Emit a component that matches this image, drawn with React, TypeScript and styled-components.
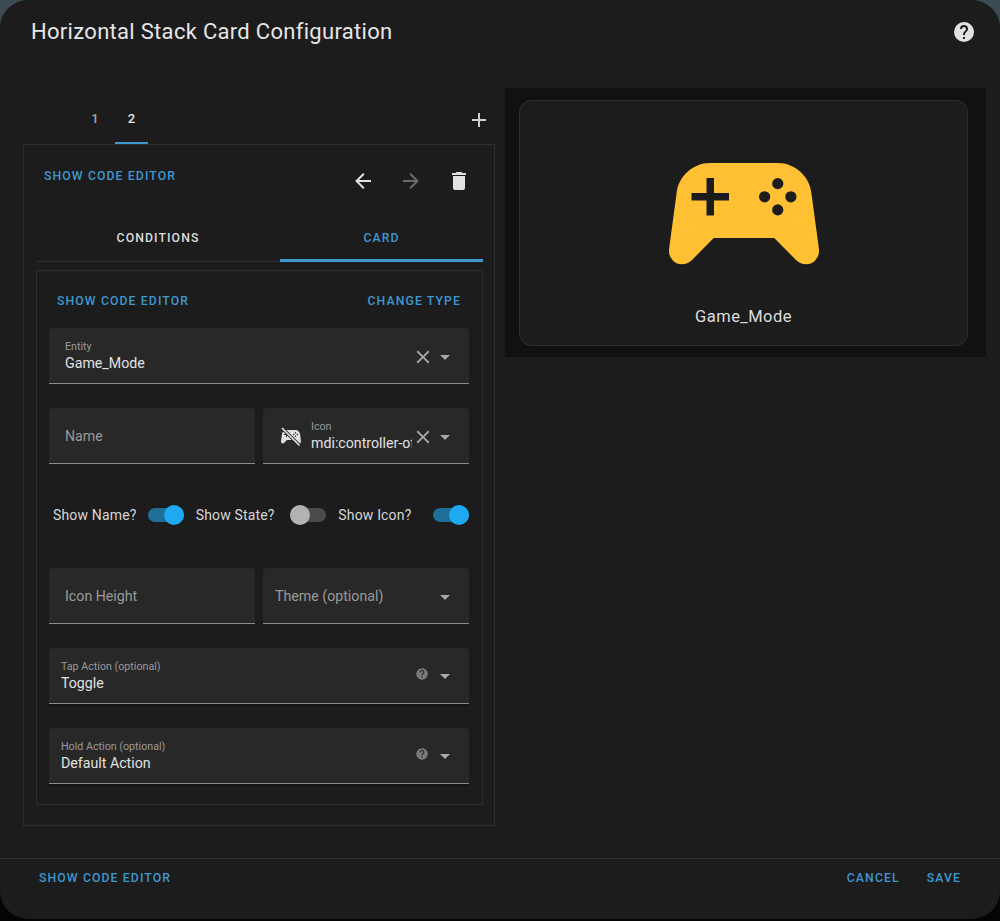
import React from "react";
import styled, { createGlobalStyle } from "styled-components";

const Global = createGlobalStyle`
  html, body { margin: 0; padding: 0; background: #050505; }
  #root { width: 1000px; height: 921px; overflow: hidden; }
  * { box-sizing: border-box; }
`;

const P = {
  controller:
    "M7.97,16L5,19C4.67,19.3 4.23,19.5 3.75,19.5A1.75,1.75 0 0,1 2,17.75V17.5L3,10.12C3.21,7.81 5.14,6 7.5,6H16.5C18.86,6 20.79,7.81 21,10.12L22,17.5V17.75A1.75,1.75 0 0,1 20.25,19.5C19.77,19.5 19.33,19.3 19,19L16.03,16H7.97M7,8V10H5V11H7V13H8V11H10V10H8V8H7M16.5,8A0.75,0.75 0 0,0 15.75,8.75A0.75,0.75 0 0,0 16.5,9.5A0.75,0.75 0 0,0 17.25,8.75A0.75,0.75 0 0,0 16.5,8M14.75,9.75A0.75,0.75 0 0,0 14,10.5A0.75,0.75 0 0,0 14.75,11.25A0.75,0.75 0 0,0 15.5,10.5A0.75,0.75 0 0,0 14.75,9.75M18.25,9.75A0.75,0.75 0 0,0 17.5,10.5A0.75,0.75 0 0,0 18.25,11.25A0.75,0.75 0 0,0 19,10.5A0.75,0.75 0 0,0 18.25,9.75M16.5,11.5A0.75,0.75 0 0,0 15.75,12.25A0.75,0.75 0 0,0 16.5,13A0.75,0.75 0 0,0 17.25,12.25A0.75,0.75 0 0,0 16.5,11.5Z",
  help:
    "M15.07,11.25L14.17,12.17C13.45,12.89 13,13.5 13,15H11V14.5C11,13.39 11.45,12.39 12.17,11.67L13.41,10.41C13.78,10.05 14,9.55 14,9C14,7.89 13.1,7 12,7A2,2 0 0,0 10,9H8A4,4 0 0,1 12,5A4,4 0 0,1 16,9C16,9.88 15.64,10.67 15.07,11.25M13,19H11V17H13M12,2A10,10 0 0,0 2,12A10,10 0 0,0 12,22A10,10 0 0,0 22,12C22,6.47 17.5,2 12,2Z",
  left: "M20,11V13H8L13.5,18.5L12.08,19.92L4.16,12L12.08,4.08L13.5,5.5L8,11H20Z",
  right: "M4,11V13H16L10.5,18.5L11.92,19.92L19.84,12L11.92,4.08L10.5,5.5L16,11H4Z",
  trash: "M19,4H15.5L14.5,3H9.5L8.5,4H5V6H19M6,19A2,2 0 0,0 8,21H16A2,2 0 0,0 18,19V7H6V19Z",
  plus: "M19,13H13V19H11V13H5V11H11V5H13V11H19V13Z",
  close:
    "M19,6.41L17.59,5L12,10.59L6.41,5L5,6.41L10.59,12L5,17.59L6.41,19L12,13.41L17.59,19L19,17.59L13.41,12L19,6.41Z",
  down: "M7,10L12,15L17,10H7Z",
};

const Icon = ({ d, size = 24, color = "#e1e1e1" }: { d: string; size?: number; color?: string }) => (
  <svg width={size} height={size} viewBox="0 0 24 24" fill={color} style={{ display: "block", flex: "none" }}>
    <path d={d} fillRule="evenodd" />
  </svg>
);

const Backdrop = styled.div`
  width: 1000px;
  height: 921px;
  background: linear-gradient(180deg, #3b4c55 0%, #1a2226 25%, #050505 70%);
  font-family: Roboto, "Liberation Sans", sans-serif;
  color: #e1e1e1;
`;
const Dialog = styled.div`
  width: 1000px;
  height: 919px;
  background: #1c1c1c;
  border-radius: 28px;
  display: flex;
  flex-direction: column;
  overflow: hidden;
`;
const Header = styled.header`
  height: 88px;
  flex: none;
  display: flex;
  justify-content: space-between;
  padding: 20px 24px 0 31px;
`;
const Title = styled.h1`
  margin: 0;
  font-size: 22px;
  font-weight: 400;
  line-height: 24px;
  letter-spacing: 0.3px;
  color: #e6e6e6;
`;
const Content = styled.main`
  flex: 1;
  display: flex;
  gap: 10px;
  padding-left: 23px;
  min-height: 0;
`;
const LeftColumn = styled.section`
  width: 472px;
  padding-top: 12px;
`;
const StackTabs = styled.div`
  height: 44px;
  display: flex;
  padding: 0 4px 0 52px;
`;
const StackTab = styled.div<{ $active?: boolean; $w: number }>`
  width: ${(p) => p.$w}px;
  height: 44px;
  padding-top: 10px;
  text-align: center;
  font-size: 13px;
  line-height: 18px;
  font-weight: 500;
  color: ${(p) => (p.$active ? "#e6e6e6" : "#a8a8a8")};
  border-bottom: 2.5px solid ${(p) => (p.$active ? "#3f97cf" : "transparent")};
`;
const PlusSlot = styled.div`
  margin-left: auto;
  padding-top: 8px;
`;
const StackBox = styled.div`
  border: 1px solid #2e2e2e;
  padding: 0 11px 20px 12px;
`;
const BoxHead = styled.div`
  height: 70px;
  display: flex;
  justify-content: space-between;
  align-items: flex-start;
`;
const LinkText = styled.span`
  font-size: 12.25px;
  font-weight: 500;
  line-height: 18px;
  letter-spacing: 1.1px;
  color: #3f97cf;
  white-space: nowrap;
`;
const HeadLink = styled(LinkText)`
  margin: 21.5px 0 0 8px;
`;
const IconButtons = styled.div`
  display: flex;
`;
const IconButton = styled.div`
  width: 48px;
  height: 48px;
  margin-top: 12px;
  display: flex;
  align-items: center;
  justify-content: center;
`;
const CardTabs = styled.div`
  height: 47px;
  display: flex;
  border-bottom: 1px solid #2e2e2e;
`;
const CardTab = styled.div<{ $active?: boolean; $grow: number }>`
  flex: ${(p) => p.$grow} 0 0;
  height: 47px;
  padding-top: 13.5px;
  text-align: center;
  font-size: 12.25px;
  font-weight: 500;
  line-height: 18px;
  letter-spacing: 1.1px;
  color: ${(p) => (p.$active ? "#3f97cf" : "#dcdcdc")};
  border-bottom: ${(p) => (p.$active ? "3px solid #3f97cf" : "none")};
`;
const InnerBox = styled.div`
  margin-top: 8px;
  border: 1px solid #2e2e2e;
  padding: 0 13px 20px 12px;
`;
const CardActions = styled.div`
  height: 57px;
  padding: 3px 8px 0;
  display: flex;
  justify-content: space-between;
  align-items: center;
`;
const Form = styled.div`
  display: flex;
  flex-direction: column;
  gap: 24px;
`;
const Row = styled.div`
  display: grid;
  grid-auto-flow: column;
  grid-auto-columns: minmax(0, 1fr);
  gap: 8px;
`;
const Field = styled.div<{ $pad?: number; $strong?: boolean }>`
  height: 56px;
  padding-left: ${(p) => p.$pad ?? 16}px;
  padding-right: 12px;
  padding-bottom: ${(p) => (p.$strong ? 2 : 0)}px;
  background: #282828;
  border-radius: 4px 4px 0 0;
  border-bottom: ${(p) => (p.$strong ? "none" : "1px solid #8a8a8a")};
  display: flex;
  align-items: center;
  position: relative;
`;
const StrongLine = styled.span`
  position: absolute;
  left: 0;
  right: 0;
  bottom: 0;
  height: 1px;
  background: #8a8a8a;
  box-shadow: 0 1.5px 0 #0c0c0c;
`;
const FieldText = styled.div`
  flex: 1;
  min-width: 0;
  overflow: hidden;
  padding-top: 2px;
`;
const FieldLabel = styled.div`
  font-size: 10.7px;
  line-height: 13px;
  color: #9a9a9a;
  white-space: nowrap;
`;
const FieldValue = styled.div`
  font-size: 14.2px;
  line-height: 20px;
  color: #e1e1e1;
  white-space: nowrap;
  overflow: hidden;
`;
const Placeholder = styled.div`
  flex: 1;
  font-size: 14.2px;
  color: #9a9a9a;
  white-space: nowrap;
`;
const ClearSlot = styled.div`
  margin: 3px -1px 0 0;
`;
const DownSlot = styled.div`
  margin-top: 2px;
`;
const HelpSlot = styled.div`
  margin: -2px 4px 0 0;
`;
const LeadIcon = styled.div`
  margin-right: 8px;
`;
const ToggleRow = styled.div`
  height: 56px;
  padding: 0 0 2px 4px;
  display: flex;
  gap: 12px;
  align-items: center;
`;
const ToggleGroup = styled.div`
  flex: 1 1 0;
  display: flex;
  justify-content: space-between;
  align-items: center;
`;
const ToggleLabel = styled.span`
  font-size: 14px;
  color: #d6d6d6;
  letter-spacing: 0.16px;
  white-space: nowrap;
`;
const Track = styled.span<{ $on?: boolean }>`
  width: 36px;
  height: 14px;
  border-radius: 7px;
  background: ${(p) => (p.$on ? "#1f6e9a" : "#4a4a4a")};
  position: relative;
  flex: none;
`;
const Thumb = styled.span<{ $on?: boolean }>`
  position: absolute;
  top: -3px;
  left: ${(p) => (p.$on ? 16 : 0)}px;
  width: 20px;
  height: 20px;
  border-radius: 50%;
  background: ${(p) => (p.$on ? "#1fa9f2" : "#b2b2b2")};
`;
const RightColumn = styled.aside`
  width: 481px;
  height: 269px;
  background: #111111;
  padding: 12px 18px 11px 14px;
`;
const PreviewCard = styled.div`
  height: 246px;
  border: 1px solid #2e2e2e;
  border-radius: 12px;
  background: #1c1c1c;
  padding-top: 17px;
  display: flex;
  flex-direction: column;
  align-items: center;
`;
const CardName = styled.div`
  margin-top: 7px;
  font-size: 16.5px;
  line-height: 24px;
  letter-spacing: 0.45px;
  color: #dedede;
`;
const Footer = styled.footer`
  height: 61px;
  flex: none;
  border-top: 1px solid #303030;
  padding: 9.5px 39px 0;
  display: flex;
  align-items: flex-start;
`;
const FooterRight = styled.div`
  margin-left: auto;
  display: flex;
  gap: 27px;
`;

const Value = ({ label, value }: { label: string; value: string }) => (
  <FieldText>
    <FieldLabel>{label}</FieldLabel>
    <FieldValue>{value}</FieldValue>
  </FieldText>
);

const Toggle = ({ label, on }: { label: string; on?: boolean }) => (
  <ToggleGroup>
    <ToggleLabel>{label}</ToggleLabel>
    <Track $on={on}>
      <Thumb $on={on} />
    </Track>
  </ToggleGroup>
);

const Down = () => (
  <DownSlot>
    <Icon d={P.down} color="#a8a8a8" />
  </DownSlot>
);
const Clear = () => (
  <ClearSlot>
    <Icon d={P.close} size={22} color="#a8a8a8" />
  </ClearSlot>
);

const ControllerOff = () => (
  <svg width="24" height="24" viewBox="0 0 24 24" style={{ display: "block", flex: "none" }}>
    <path d={P.controller} fill="#e1e1e1" fillRule="evenodd" />
    <line x1="3" y1="4" x2="20.5" y2="21.5" stroke="#282828" strokeWidth="3.2" />
    <line x1="3" y1="4" x2="20.5" y2="21.5" stroke="#e1e1e1" strokeWidth="1.7" />
  </svg>
);

export default function App() {
  return (
    <Backdrop>
      <Global />
      <Dialog>
        <Header>
          <Title>Horizontal Stack Card Configuration</Title>
          <Icon d={P.help} />
        </Header>
        <Content>
          <LeftColumn>
            <StackTabs>
              <StackTab $w={40}>1</StackTab>
              <StackTab $w={33} $active>2</StackTab>
              <PlusSlot>
                <Icon d={P.plus} color="#cfcfcf" />
              </PlusSlot>
            </StackTabs>
            <StackBox>
              <BoxHead>
                <HeadLink>SHOW CODE EDITOR</HeadLink>
                <IconButtons>
                  <IconButton><Icon d={P.left} /></IconButton>
                  <IconButton><Icon d={P.right} color="#6a6a6a" /></IconButton>
                  <IconButton><Icon d={P.trash} /></IconButton>
                </IconButtons>
              </BoxHead>
              <CardTabs>
                <CardTab $grow={244}>CONDITIONS</CardTab>
                <CardTab $grow={203} $active>CARD</CardTab>
              </CardTabs>
              <InnerBox>
                <CardActions>
                  <LinkText>SHOW CODE EDITOR</LinkText>
                  <LinkText>CHANGE TYPE</LinkText>
                </CardActions>
                <Form>
                  <Row>
                    <Field>
                      <Value label="Entity" value="Game_Mode" />
                      <Clear />
                      <Down />
                    </Field>
                  </Row>
                  <Row>
                    <Field>
                      <Placeholder>Name</Placeholder>
                    </Field>
                    <Field>
                      <LeadIcon><ControllerOff /></LeadIcon>
                      <Value label="Icon" value="mdi:controller-off" />
                      <Clear />
                      <Down />
                    </Field>
                  </Row>
                  <ToggleRow>
                    <Toggle label="Show Name?" on />
                    <Toggle label="Show State?" />
                    <Toggle label="Show Icon?" on />
                  </ToggleRow>
                  <Row>
                    <Field>
                      <Placeholder>Icon Height</Placeholder>
                    </Field>
                    <Field $pad={12}>
                      <Placeholder>Theme (optional)</Placeholder>
                      <Down />
                    </Field>
                  </Row>
                  <Row>
                    <Field $pad={12} $strong>
                      <Value label="Tap Action (optional)" value="Toggle" />
                      <HelpSlot><Icon d={P.help} size={14} color="#7a7a7a" /></HelpSlot>
                      <Down />
                      <StrongLine />
                    </Field>
                  </Row>
                  <Row>
                    <Field $pad={12} $strong>
                      <Value label="Hold Action (optional)" value="Default Action" />
                      <HelpSlot><Icon d={P.help} size={14} color="#7a7a7a" /></HelpSlot>
                      <Down />
                      <StrongLine />
                    </Field>
                  </Row>
                </Form>
              </InnerBox>
            </StackBox>
          </LeftColumn>
          <RightColumn>
            <PreviewCard>
              <Icon d={P.controller} size={180} color="#ffc034" />
              <CardName>Game_Mode</CardName>
            </PreviewCard>
          </RightColumn>
        </Content>
        <Footer>
          <LinkText>SHOW CODE EDITOR</LinkText>
          <FooterRight>
            <LinkText>CANCEL</LinkText>
            <LinkText>SAVE</LinkText>
          </FooterRight>
        </Footer>
      </Dialog>
    </Backdrop>
  );
}
